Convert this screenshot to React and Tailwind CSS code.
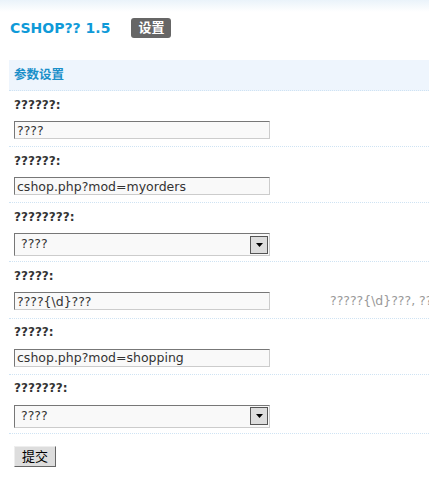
import { useState } from 'react'

const FONT = { fontFamily: '"DejaVu Sans", Verdana, "Noto Sans CJK SC", sans-serif' }

const FIELDS = [
  { label: '??????:', type: 'text', value: '????' },
  { label: '??????:', type: 'text', value: 'cshop.php?mod=myorders' },
  { label: '????????:', type: 'select', value: '????' },
  { label: '?????:', type: 'text', value: '????{\\d}???', hint: '?????{\\d}???, ??????' },
  { label: '?????:', type: 'text', value: 'cshop.php?mod=shopping' },
  { label: '???????:', type: 'select', value: '????' },
]

function TextField({ value }) {
  const [v, setV] = useState(value)
  return (
    <input
      value={v}
      onChange={(e) => setV(e.target.value)}
      className="block h-[18px] w-[256px] border border-t-[#777] border-l-[#777] border-b-[#ccc] border-r-[#ccc] bg-[#f9f9f9] px-[2px] text-[12.5px] leading-[16px] text-[#333] outline-none"
      style={FONT}
    />
  )
}

function SelectField({ value }) {
  return (
    <div className="flex h-[23px] w-[256px] items-center justify-between border border-t-[#777] border-l-[#777] border-b-[#ccc] border-r-[#ccc] bg-[#f9f9f9] pl-[6px] pr-[1px]">
      <span className="text-[12.5px] text-[#333]">{value}</span>
      <span className="flex h-[18px] w-[18px] items-center justify-center border border-[#555] bg-[#ddd]">
        <svg width="7" height="4" viewBox="0 0 7 4"><path d="M0 0h7L3.5 4z" fill="#000" /></svg>
      </span>
    </div>
  )
}

export default function App() {
  return (
    <div className="h-[479px] w-[429px] overflow-hidden bg-white text-[#333]" style={FONT}>
      <div className="h-[12px] bg-gradient-to-b from-[#eaf3fa] to-white" />
      <div className="flex h-[32px] items-center pl-[10px]">
        <h1 className="text-[14px] font-bold text-[#0f9ad8]">CSHOP?? 1.5</h1>
        <span className="ml-[21px] flex h-[20px] w-[40px] items-center justify-center rounded-[3px] bg-[#666] text-[13px] font-bold text-white">设置</span>
      </div>

      <div className="mt-[16px] ml-[9px] w-[600px]">
        <div className="flex h-[31px] items-center border-b border-dotted border-[#cfe3f3] bg-[#eef5fd] pl-[5px] text-[12.5px] font-bold text-[#1a8fc9]">
          参数设置
        </div>

        {FIELDS.map((f, i) => (
          <div key={i}>
            <div className="flex h-[27px] items-center pl-[5px] text-[12px] font-bold text-[#333]">{f.label}</div>
            <div className={`flex border-b border-dotted border-[#cfe3f3] pl-[5px] ${f.type === 'select' ? 'pt-[3px] pb-[5px]' : 'pt-[3px] pb-[7px]'}`}>
              {f.type === 'select' ? <SelectField value={f.value} /> : <TextField value={f.value} />}
              {f.hint && (
                <span className="ml-[60px] self-center text-[12.5px] whitespace-nowrap text-[#999]">{f.hint}</span>
              )}
            </div>
          </div>
        ))}

        <div className="pt-[10px] pl-[5px]">
          <button type="button" className="h-[21px] w-[42px] border border-t-[#eee] border-l-[#eee] border-b-[#666] border-r-[#666] bg-[#ddd] text-[13px] text-[#000]">
            提交
          </button>
        </div>
      </div>
    </div>
  )
}
